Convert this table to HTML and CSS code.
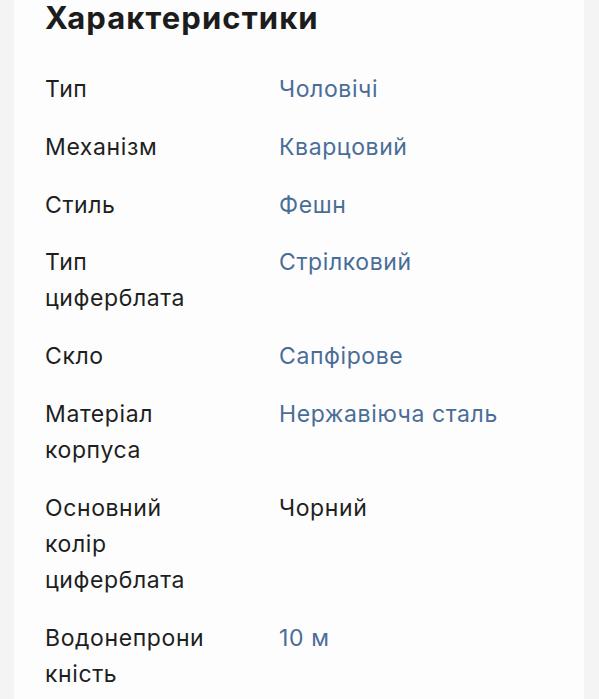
FILE: index.html
```html
<!DOCTYPE html>
<html lang="uk">
<head>
<meta charset="utf-8">
<link rel="stylesheet" href="styles.css">
</head>
<body>
<section class="card">
  <h2 class="title">Характеристики</h2>
  <dl class="specs">
    <dt>Тип</dt><dd class="link">Чоловічі</dd>
    <dt>Механізм</dt><dd class="link">Кварцовий</dd>
    <dt>Стиль</dt><dd class="link">Фешн</dd>
    <dt>Тип<br>циферблата</dt><dd class="link">Стрілковий</dd>
    <dt>Скло</dt><dd class="link">Сапфірове</dd>
    <dt>Матеріал<br>корпуса</dt><dd class="link">Нержавіюча сталь</dd>
    <dt>Основний<br>колір<br>циферблата</dt><dd>Чорний</dd>
    <dt>Водонепрони<br>кність</dt><dd class="link">10 м</dd>
  </dl>
</section>
</body>
</html>
```

FILE: styles.css
```css
html, body {
  margin: 0;
  padding: 0;
  background: #f4f4f4;
  height: 100%;
}
body {
  font-family: Inter, "Noto Sans", sans-serif;
  color: #1f1f1f;
}
.card {
  margin: 0 15px 0 14px;
  background: #fdfdfd;
  padding: 0 20px 0 31px;
  min-height: 100%;
  box-sizing: border-box;
}
.title {
  margin: 0;
  font-size: 31px;
  line-height: 36px;
  font-weight: 700;
  color: #1c1c1c;
  letter-spacing: 1.1px;
}
.specs {
  margin: 35px 0 0;
  display: grid;
  grid-template-columns: 234px 1fr;
  row-gap: 21.8px;
  font-size: 23px;
  line-height: 36px;
  letter-spacing: 0.6px;
}
.specs dt, .specs dd {
  margin: 0;
}
.specs dd {
  color: #222;
}
.specs dd.link {
  color: #4a6d98;
}
```
